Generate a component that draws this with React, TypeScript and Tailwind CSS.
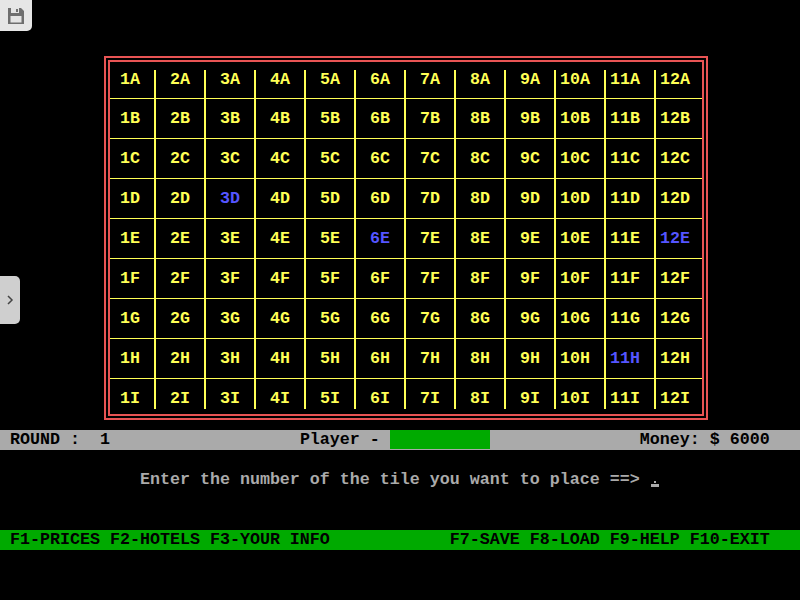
import React from 'react';

const ROWS = 'ABCDEFGHI'.split('');
const BLUE = new Set(['3D', '6E', '12E', '11H']);

function Cell({ r, c }: { r: number; c: number }) {
  const label = `${c + 1}${ROWS[r]}`;
  const outer = [
    'flex flex-col',
    r < 8 ? 'border-b border-[#ffff55]' : '',
    r === 0 ? 'pt-[8px]' : '',
    r === 8 ? 'pb-[5px]' : '',
  ].join(' ');
  const inner = [
    'flex-1 flex items-center justify-end',
    c < 11 ? 'border-r-2 border-[#ffff55] pr-[14px]' : 'pr-[12px]',
  ].join(' ');
  const span = [
    'leading-[20px]',
    BLUE.has(label) ? 'text-[#5555ff]' : 'text-[#ffff55]',
    r === 0 ? 'mb-[10px]' : '',
    r === 8 ? 'mt-[9px]' : '',
  ].join(' ');
  return (
    <div className={outer}>
      <div className={inner}>
        <span className={span}>{label}</span>
      </div>
    </div>
  );
}

function FloppyIcon() {
  return (
    <svg width="18" height="18" viewBox="0 0 18 18">
      <path d="M1 1 H14 L17 4 V17 H1 Z" fill="#6e6e6e" />
      <rect x="4" y="1" width="8" height="5" fill="#e4e4e4" />
      <rect x="9" y="2" width="2" height="3" fill="#6e6e6e" />
      <rect x="3.5" y="9" width="11" height="6.5" fill="#e4e4e4" />
    </svg>
  );
}

export default function App() {
  const sp = (n: number) => ' '.repeat(n);
  return (
    <div className="relative w-[800px] h-[600px] bg-black overflow-hidden pt-[56px] font-['Liberation_Mono','Courier_New',monospace] font-bold text-[16.66px] leading-[20px]">
      {/* Board */}
      <div className="ml-[104px] w-[604px] h-[364px] border-2 border-[#e85454] p-[2px]">
        <div className="h-full border-2 border-[#e85454] grid grid-cols-[46px_repeat(10,50px)_46px] grid-rows-[37px_repeat(7,40px)_35px]">
          {ROWS.map((_, r) =>
            Array.from({ length: 12 }, (_, c) => <Cell key={`${r}-${c}`} r={r} c={c} />)
          )}
        </div>
      </div>

      {/* Status bar */}
      <div className="mt-[10px] h-[20px] bg-[#aaaaaa] text-black whitespace-pre">
        {' ROUND :  1'}
        {sp(19)}
        {'Player - '}
        <span className="bg-[#00aa00]">{sp(10)}</span>
        {sp(15)}
        {'Money: $ 6000'}
      </div>

      {/* Prompt */}
      <div className="mt-[20px] h-[20px] text-[#aaaaaa] whitespace-pre flex">
        <span>{sp(14) + 'Enter the number of the tile you want to place ==> '}</span>
        <span className="w-[10px] h-[20px] flex flex-col items-center justify-end">
          <span className="w-[2px] h-[2px] bg-[#aaaaaa] mb-[1px]" />
          <span className="w-[8px] h-[3px] bg-[#aaaaaa] mb-[3px]" />
        </span>
      </div>

      {/* Function key bar */}
      <div className="mt-[40px] h-[20px] bg-[#00aa00] text-black whitespace-pre">
        {' F1-PRICES F2-HOTELS F3-YOUR INFO'}
        {sp(12)}
        {'F7-SAVE F8-LOAD F9-HELP F10-EXIT'}
      </div>

      {/* Overlay: save button */}
      <div className="absolute left-0 top-0 w-[32px] h-[31px] bg-[#e6e6e6] rounded-br-[5px] flex items-center justify-center">
        <FloppyIcon />
      </div>

      {/* Overlay: side tab */}
      <div className="absolute left-0 top-[276px] w-[20px] h-[48px] bg-[#cfcfcf] rounded-r-[5px] flex items-center justify-center">
        <svg width="8" height="12" viewBox="0 0 8 12">
          <path d="M2 2 L6 6 L2 10" stroke="#444" strokeWidth="1.5" fill="none" />
        </svg>
      </div>
    </div>
  );
}
